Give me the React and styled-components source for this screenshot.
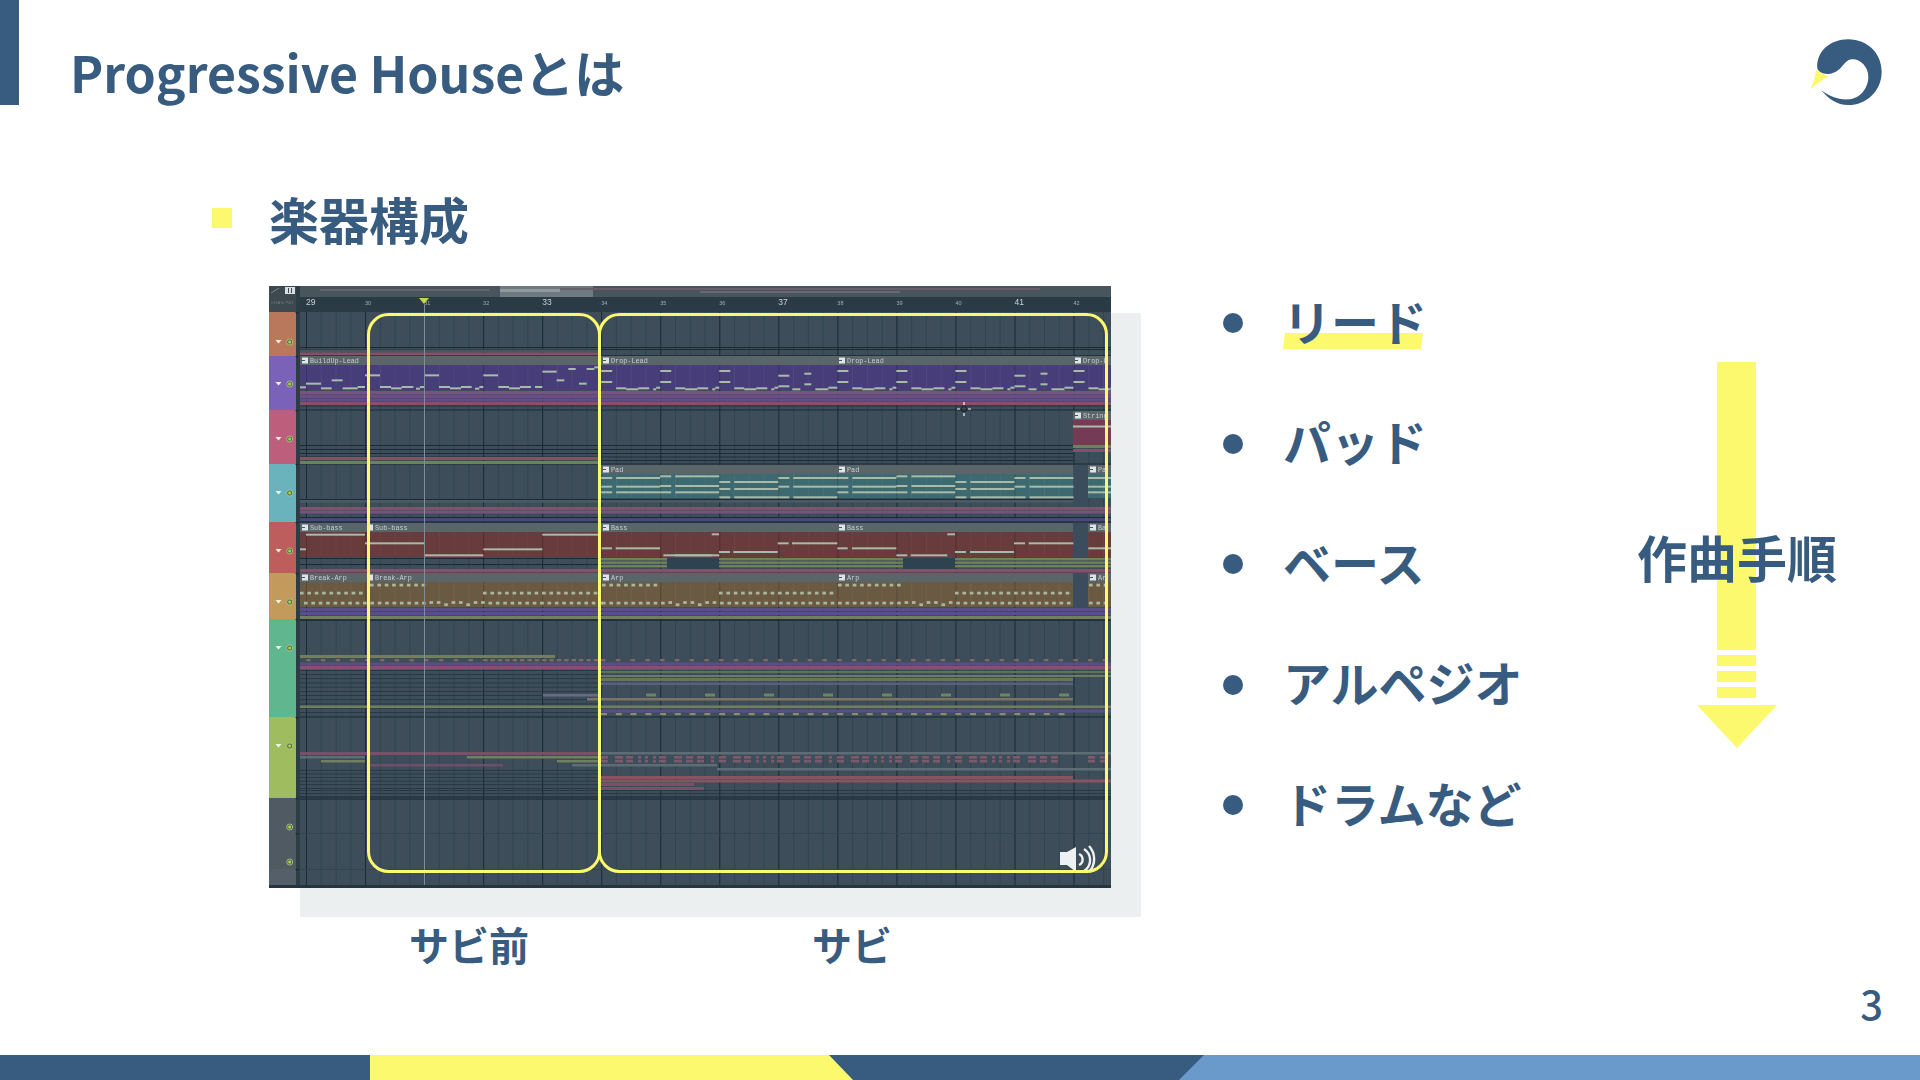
import React from "react";
import styled, { createGlobalStyle } from "styled-components";

const NAVY = "#385c80";
const YELLOW = "#fcf96f";
const FONT = `"Noto Sans CJK JP", "Noto Sans", sans-serif`;

const GlobalStyle = createGlobalStyle`
  html, body {
    margin: 0;
    padding: 0;
    background: #fff;
  }
`;

const Page = styled.div`
  width: 1920px;
  height: 1080px;
  display: flex;
  flex-direction: column;
  overflow: hidden;
  background: #fff;
  color: ${NAVY};
  font-family: ${FONT};
`;

// Header

const Header = styled.header`
  height: 105px;
  display: flex;
  align-items: flex-start;
`;

const AccentBar = styled.div`
  width: 19px;
  height: 105px;
  background: ${NAVY};
`;

const Title = styled.h1`
  margin: 41px 0 0 51px;
  font-size: 50px;
  line-height: 60px;
  font-weight: 700;
`;

const Logo = styled.svg`
  width: 140px;
  height: 100px;
  margin: 20px 0 0 auto;
`;

// Body

const Body = styled.main`
  height: 875px;
  display: flex;
  padding-left: 212px;
`;

const LeftColumn = styled.section`
  width: 929px;
  flex: none;
`;

const SectionRow = styled.div`
  height: 72px;
  margin-top: 80px;
  display: flex;
  align-items: center;
  gap: 37px;
`;

const Square = styled.span`
  width: 20px;
  height: 20px;
  margin-top: -6px;
  background: ${YELLOW};
`;

const SectionTitle = styled.h2`
  margin: -6px 0 0;
  font-size: 50px;
  line-height: 72px;
  font-weight: 700;
`;

const Frame = styled.div`
  position: relative;
  isolation: isolate;
  width: 842px;
  height: 602px;
  margin: 29px 0 0 57px;

  &::before {
    content: "";
    position: absolute;
    z-index: -1;
    left: 31px;
    top: 27px;
    width: 841px;
    height: 604px;
    background: #ebeff0;
  }
`;

const Daw = styled.svg`
  display: block;
  width: 842px;
  height: 602px;
`;

const Captions = styled.div`
  display: grid;
  grid-template-columns: 400px 366px;
  margin: 36px 0 0 57px;
`;

const Caption = styled.div`
  text-align: center;
  font-size: 40px;
  line-height: 40px;
  font-weight: 700;
`;

const List = styled.ul`
  list-style: none;
  margin: 157px 0 0 82px;
  padding: 0;
`;

const Item = styled.li`
  height: 120.5px;
  display: flex;
  align-items: center;
  gap: 40px;
  font-size: 48px;
  font-weight: 700;
`;

const Dot = styled.span`
  width: 20px;
  height: 20px;
  margin-top: 2px;
  border-radius: 50%;
  background: ${NAVY};
`;

const ItemText = styled.span`
  position: relative;
  z-index: 0;
  margin-top: -5px;
  line-height: 48px;
  ${(p) =>
    p.$marked &&
    `
    &::before {
      content: "";
      position: absolute;
      z-index: -1;
      left: 1px;
      right: 5px;
      top: 37px;
      height: 16px;
      background: ${YELLOW};
      transform: skewX(-7deg);
    }
  `}
`;

const ArrowColumn = styled.div`
  position: relative;
  width: 80px;
  margin: 257px 143px 0 auto;
  display: flex;
  flex-direction: column;
  align-items: center;
`;

const Shaft = styled.div`
  width: 39px;
  height: 288px;
  margin-right: 1px;
  background: ${YELLOW};
`;

const Stripe = styled.div`
  width: 39px;
  height: 11px;
  margin: 5px 1px 0 0;
  background: ${YELLOW};
`;

const ArrowHead = styled.div`
  width: 80px;
  height: 43px;
  margin-top: 7px;
  background: ${YELLOW};
  clip-path: polygon(0 0, 100% 0, 50% 100%);
`;

const ArrowLabel = styled.div`
  position: absolute;
  top: 169px;
  left: 50%;
  transform: translateX(-50%);
  white-space: nowrap;
  font-size: 50px;
  line-height: 50px;
  font-weight: 700;
`;

// Footer

const PageNumber = styled.div`
  height: 50px;
  margin-bottom: 25px;
  padding-right: 37px;
  text-align: right;
  font-size: 40px;
  line-height: 46px;
  font-weight: 500;
`;

const Footer = styled.footer`
  height: 25px;
  display: flex;
  background: ${NAVY};
`;

const FooterYellow = styled.div`
  width: 483px;
  margin-left: 370px;
  background: ${YELLOW};
  clip-path: polygon(0 0, 459px 0, 100% 100%, 0 100%);
`;

const FooterBlue = styled.div`
  width: 741px;
  margin-left: auto;
  background: #6a99cb;
  clip-path: polygon(25px 0, 100% 0, 100% 100%, 0 100%);
`;

// DAW picture helpers, all in page coordinates (viewBox starts at 269,286)

const BAR = 59.04;
const barX = (n) => 306 + BAR * (n - 29);
const bars = [];
for (let n = 28; n <= 43; n++) bars.push(n);

const Z1 = (v) => 260 + v / 3;
const Y1 = (v) => 280 + v / 3;
const Z2 = (v) => 660 + v / 3;

const channels = [
  [312, 356, "#b9785c", 342, true],
  [356, 410, "#7a62b8", 384, true],
  [410, 464, "#bd5f7c", 439, true],
  [464, 522, "#6bb3bd", 493, true],
  [522, 573, "#bd5d5c", 551, true],
  [573, 619, "#c29a5c", 602, true],
  [619, 717, "#61b78f", 648, true],
  [717, 798, "#9fbc5f", 746, true],
  [798, 833, "#4f5a64", 827, false],
  [833, 869, "#4f5a64", 862, false],
  [869, 888, "#545f69", 0, false],
];

const PINK = "#8a5068";
const OLIVE = "#6f7f5c";
const PURPLE = "#5f4e8a";
const MAUVE = "#77527f";
const NOTE = "#a9bba8";
const GRAY = "#5d6c74";

// [x1, x2, y, height, colour]
const stripes = [
  [300, 1111, 347, 1, "#1d2a32"],
  [300, 1111, 349, 1, "#1d2a32"],
  [300, 601, 349.5, 2.5, "#48565e"],
  [300, 601, 352.5, 3, PINK],
  [300, 1111, 355.5, 1, "#1d2a32"],
  [300, 1111, 391, 3.5, MAUVE],
  [300, 1111, 395, 3, "#6d4e85"],
  [300, 1111, 398.5, 3, PURPLE],
  [300, 1111, 402, 3, PINK],
  [300, 1111, 405.5, 1, "#24323a"],
  [300, 1073, 445, 1, "#1f2c34"],
  [300, 1073, 449, 1, "#1f2c34"],
  [300, 1073, 453, 1, "#1f2c34"],
  [300, 1073, 456.5, 1, "#1f2c34"],
  [300, 601, 457, 3, PINK],
  [300, 601, 461, 3, OLIVE],
  [601, 1073, 460, 1, "#1f2c34"],
  [300, 1073, 499, 1, "#1f2c34"],
  [300, 1073, 500, 2.5, "#4c5a60"],
  [300, 1111, 507, 3, PINK],
  [300, 1111, 510.5, 3, MAUVE],
  [300, 1111, 517, 1, "#1f2c34"],
  [300, 1111, 518.5, 3, "#4a4680"],
  [300, 1111, 521.5, 1, "#1f2c34"],
  [300, 601, 558, 1, "#1f2c34"],
  [300, 601, 564, 1, "#1f2c34"],
  [300, 1111, 569, 3.5, PINK],
  [300, 1111, 608, 3, "#5c4e86"],
  [300, 1111, 612, 3, "#5c4e86"],
  [300, 1111, 616, 3, OLIVE],
  [300, 1111, 619.5, 1, "#1d2a32"],
  [300, 555, 655, 3, OLIVE],
  [300, 1111, 662.5, 3, "#5a4e88"],
  [300, 1111, 666, 3.5, "#8a5070"],
  [601, 1111, 671, 2, "#5f7258"],
  [601, 1111, 675, 2, "#6a7b5c"],
  [601, 1073, 678, 3, "#66755c"],
  [601, 1073, 682.5, 2.5, "#5a5f80"],
  [543, 601, 694, 2.5, "#6b6a84"],
  [587, 1073, 698, 2.5, "#7d7460"],
  [300, 1111, 705.5, 2.5, OLIVE],
  [601, 1111, 709.5, 3, "#5a4e88"],
  [300, 601, 752, 3, "#7a5068"],
  [601, 1111, 752, 2.5, GRAY],
  [300, 365, 756, 2.5, GRAY],
  [467, 600, 756, 2.5, OLIVE],
  [321, 365, 760, 2.5, OLIVE],
  [557, 600, 760, 2.5, OLIVE],
  [370, 503, 764, 2.5, "#6d4f68"],
  [572, 717, 764, 2.5, GRAY],
  [717, 1111, 768, 2.5, GRAY],
  [601, 1073, 776, 3, "#86545f"],
  [601, 1111, 779.5, 3, "#86545f"],
  [601, 694, 783, 3, "#7c5068"],
  [601, 704, 787, 3, "#7c5068"],
  [300, 1111, 833, 1, "#33444f"],
  [300, 1111, 869, 1, "#33444f"],
];

// thin dark lines in the busy parts of the piano roll
const rules = [];
for (let y = 670; y < 716; y += 4.2) rules.push([300, 601, y]);
for (let y = 790; y < 800; y += 3) rules.push([300, 1111, y]);
for (let y = 770; y < 790; y += 3.6) rules.push([300, 601, y]);

const LEAD = "#473e78";
const STR = "#743a55";
const TEAL = "#3d6a70";
const RED = "#673a3d";
const TAN = "#6b5a42";

// [x, width, label, top, bottom, body]
const clips = [
  [300, 301, "BuildUp-Lead", 356, 390, LEAD],
  [601, 236, "Drop-Lead", 356, 390, LEAD],
  [837, 236, "Drop-Lead", 356, 390, LEAD],
  [1073, 38, "Drop-L", 356, 390, LEAD],
  [1073, 38, "String", 411, 445, STR],
  [601, 236, "Pad", 465, 498, TEAL],
  [837, 236, "Pad", 465, 498, TEAL],
  [1088, 23, "Pa", 465, 498, TEAL],
  [300, 65, "Sub-bass", 523, 557, RED],
  [365, 236, "Sub-bass", 523, 557, RED],
  [601, 236, "Bass", 523, 557, RED],
  [837, 236, "Bass", 523, 557, RED],
  [1088, 23, "Ba", 523, 557, RED],
  [300, 65, "Break-Arp", 573, 607, TAN],
  [365, 236, "Break-Arp", 573, 607, TAN],
  [601, 236, "Arp", 573, 607, TAN],
  [837, 236, "Arp", 573, 607, TAN],
  [1088, 23, "Ar", 573, 607, TAN],
];

const clipBands = [
  [300, 1111, 365, 25],
  [601, 1073, 474, 24],
  [1088, 1111, 474, 24],
  [300, 1073, 532, 25],
  [1088, 1111, 532, 25],
  [300, 1073, 582, 25],
  [1088, 1111, 582, 25],
];

const buildUp = [
  [120, 138, 322], [138, 183, 311], [183, 215, 325], [215, 248, 301], [248, 293, 325],
  [293, 315, 321], [315, 360, 286], [360, 393, 321], [393, 425, 325], [425, 460, 321],
  [468, 480, 326], [480, 493, 321], [493, 537, 286], [537, 570, 321], [570, 603, 325],
  [603, 635, 321], [645, 658, 326], [658, 670, 321], [670, 714, 286], [715, 747, 321],
  [747, 780, 325], [780, 813, 321], [825, 847, 321], [847, 890, 275], [890, 913, 301],
  [925, 947, 267], [957, 980, 311], [980, 1003, 267], [1003, 1015, 262],
].map(([a, b, y]) => [Z1(a), Z1(b), Y1(y)]);

const subBass = [
  [120, 138, 808], [138, 315, 764], [315, 493, 790], [493, 670, 826], [670, 847, 808], [847, 1015, 764],
].map(([a, b, y]) => [Z1(a), Z1(b), Y1(y)]);

const bass = [
  [1025, 1056, 805], [1067, 1200, 805], [1210, 1378, 826],
].map(([a, b, y]) => [Z1(a), Z1(b), Y1(y)]).concat(
  [
    [45, 155, 826], [155, 177, 763], [177, 210, 816], [220, 353, 816], [353, 386, 790],
    [396, 532, 790], [532, 563, 805], [576, 709, 805], [709, 742, 826], [752, 862, 826],
    [862, 885, 763], [885, 918, 816], [930, 1062, 816], [1062, 1095, 790], [1106, 1240, 790],
    [1285, 1353, 805],
  ].map(([a, b, y]) => [Z2(a), Z2(b), Y1(y)])
);

const leadA = [[0, 11, 371], [0, 11, 382], [15, 25, 388.3], [25, 37, 389.3], [37, 48, 388.3], [52, 55, 389.3], [55, 59, 387.7]];
const leadB = [[0, 11, 375.7], [0, 11, 386.3], [14, 22, 389.3], [26, 33, 373.7], [26, 33, 384.3], [37, 50, 389.3], [50, 59, 387.7]];

const lead = [];
for (let n = 34; n <= 42; n++) {
  const x = barX(n);
  ((n - 34) % 4 === 3 ? leadB : leadA).forEach(([a, b, y]) => lead.push([x + a, Math.min(x + b, 1111), y]));
}

const chords = [
  [594, 620, 637],
  [589, 618, 637],
  [606, 627, 652],
  [594, 620, 652],
];

const pad = [];
for (let n = 34; n <= 41; n++) {
  const x = barX(n);
  chords[(n - 34) % 4].forEach((y) => {
    pad.push([x, x + 11, Y1(y)]);
    pad.push([x + 15, x + 59, Y1(y)]);
  });
}
[594, 620, 637].forEach((y) => pad.push([1088, 1111, Y1(y)]));

const dotRun = (a, b, y, step = 7.38) => {
  const out = [];
  for (let x = a; x < b; x += step) out.push([x, y]);
  return out;
};

// the low arp row wiggles in every fourth bar
const wiggly = (x) => (x > 428 && x < 483) || (x > 663 && x < 719) || (x > 900 && x < 955);
const wiggle = (list) =>
  list.map(([x, y], i) => [x, wiggly(x) ? y + (i % 3 === 1 ? 1.6 : -0.6) : y]);

const arpDots = [
  ...dotRun(300, 361, 593),
  ...dotRun(370, 427, 585),
  ...dotRun(483, 600, 593),
  ...wiggle(dotRun(304, 600, 603)),
  ...dotRun(602, 660, 585),
  ...dotRun(719, 833, 593),
  ...dotRun(838, 900, 585),
  ...dotRun(955, 1069, 593),
  ...wiggle(dotRun(602, 1072, 603)),
  ...dotRun(1089, 1111, 585),
  ...dotRun(1089, 1111, 603),
];

const leadDashes = [
  ...dotRun(306, 480, 660, 14.76),
  ...dotRun(483, 595, 660, 7.38),
  ...dotRun(601, 1105, 660, 14.76),
];
const lowDashes = dotRun(601, 1060, 714, 14.76);

// two-bar drum figure under the lime channel, repeated from bar 34
const drumFigure = [[0, 7], [14, 22], [25, 32], [37, 40], [44, 47], [52, 55], [58, 65], [73, 81], [85, 92], [96, 103], [110, 113]];
const drumBlocks = [];
for (let start = 601; start < 1068; start += 118) {
  drumFigure.forEach(([a, b]) => {
    if (start + b < 1068) drumBlocks.push([start + a, b - a]);
  });
}
[1088, 1100].forEach((x) => drumBlocks.push([x, 7]));

const tomMarks = [646, 705, 764, 823, 882, 941, 1000, 1059];

const Line = ({ notes, colour = NOTE, h = 2 }) =>
  notes.map(([a, b, y], i) => <rect key={i} x={a} y={y - h / 2} width={b - a} height={h} fill={colour} />);

function DawPicture() {
  return (
    <Daw viewBox="269 286 842 602">
      <defs>
        <filter id="soft" x="0" y="0" width="100%" height="100%">
          <feGaussianBlur stdDeviation="0.45" />
        </filter>
      </defs>
      <g filter="url(#soft)">
        <rect x="269" y="286" width="842" height="602" fill="#3c4e5a" />

        {/* overview strip and timeline */}
        <rect x="269" y="286" width="842" height="12" fill="#4a555c" />
        <rect x="500" y="286" width="93" height="11" fill="#6e7a80" />
        <rect x="500" y="289" width="60" height="3" fill="#8f9a9c" />
        <rect x="320" y="289" width="170" height="2" fill="#66626e" />
        <rect x="560" y="288" width="480" height="2" fill="#65606c" />
        <rect x="700" y="291" width="200" height="2" fill="#6a6676" />
        <rect x="269" y="297" width="842" height="15" fill="#2c3a44" />

        {/* grid */}
        {bars.map((n) =>
          [1, 2, 3].map((k) => (
            <rect key={`${n}-${k}`} x={barX(n) + (BAR / 4) * k} y="312" width="1" height="576" fill="#324450" />
          ))
        )}
        {bars.map((n) => (
          <rect key={n} x={barX(n)} y="312" width="1" height="576" fill="#1b2932" />
        ))}
        {[356, 410, 464, 522, 573, 620, 717, 798].map((y) => (
          <rect key={y} x="300" y={y - 0.5} width="811" height="1" fill="#1d2a32" />
        ))}
        {rules.map(([a, b, y], i) => (
          <rect key={i} x={a} y={y} width={b - a} height="0.7" fill="#22323c" />
        ))}

        {/* empty gap columns */}
        <rect x="1073" y="465" width="15" height="154" fill="#3a4d5b" />
        <rect x="667" y="558" width="52" height="11" fill="#2f4250" />
        <rect x="903" y="558" width="52" height="11" fill="#2f4250" />

        {/* bass olive lines */}
        {[[601, 667], [719, 903], [955, 1111]].map(([a, b]) =>
          [558, 561.5, 565].map((y) => <rect key={`${a}-${y}`} x={a} y={y} width={b - a} height="2.4" fill={OLIVE} />)
        )}

        {stripes.map(([a, b, y, h, c], i) => (
          <rect key={i} x={a} y={y} width={b - a} height={h} fill={c} />
        ))}

        {/* clips */}
        {clips.map(([x, w, label, top, bottom, body], i) => (
          <g key={i}>
            <rect x={x} y={top} width={w} height={bottom - top} fill={body} />
            <rect x={x} y={top} width={w} height="9" fill="#5a656b" />
            <rect x={x + 2} y={top + 1.5} width="6" height="6" fill="#dfe5e6" />
            <rect x={x + 2} y={top + 4} width="3" height="1" fill="#4a555c" />
            <text x={x + 10} y={top + 7} fontFamily="Liberation Mono, monospace" fontSize="6.8" fill="#c6ced0">
              {label}
            </text>
          </g>
        ))}

        {/* beat lines showing through the clip bodies */}
        {clipBands.map(([a, b, y, h]) =>
          bars.map((n) =>
            [0, 1, 2, 3].map((k) => {
              const x = barX(n) + (BAR / 4) * k;
              return x > a && x < b ? (
                <rect key={`${y}-${a}-${n}-${k}`} x={x} y={y} width="1" height={h} fill={k === 0 ? "#00000033" : "#ffffff0d"} />
              ) : null;
            })
          )
        )}

        <Line notes={buildUp} />
        <Line notes={lead} />
        <Line notes={pad} />
        <Line notes={subBass} />
        <Line notes={bass} />
        <rect x="1073" y="425.5" width="38" height="2" fill={NOTE} />
        <rect x="1073" y="445" width="38" height="3" fill={OLIVE} />
        <rect x="1073" y="449" width="38" height="3" fill={PINK} />

        {arpDots.map(([x, y], i) => (
          <rect key={i} x={x} y={y - 1.3} width="3.6" height="2.8" fill="#aab69c" />
        ))}
        {leadDashes.map(([x, y], i) => (
          <rect key={i} x={x} y={y - 1} width="4.5" height="2.4" fill="#7e6a62" />
        ))}
        {lowDashes.map(([x, y], i) => (
          <rect key={i} x={x} y={y - 1} width="6" height="2.2" fill="#8d8d6c" />
        ))}
        {drumBlocks.map(([x, w], i) => (
          <g key={i}>
            <rect x={x} y="756" width={w} height="6.5" fill="#7c5a6c" />
            <rect x={x} y="758.7" width={w} height="1.2" fill="#3c4e5a" />
          </g>
        ))}
        {tomMarks.map((x) => (
          <rect key={x} x={x} y="693.5" width="10" height="3" fill="#6f8268" />
        ))}

        {/* timeline numbers */}
        {bars.slice(1, 15).map((n) => (
          <text
            key={n}
            x={barX(n)}
            y={n % 4 === 1 ? 305 : 304.5}
            fontFamily="Liberation Sans, sans-serif"
            fontSize={n % 4 === 1 ? 8.5 : 5.5}
            fill={n % 4 === 1 ? "#c8d2d6" : "#9fadb3"}
          >
            {n}
          </text>
        ))}

        {/* playhead */}
        <rect x="424" y="305" width="1" height="583" fill="#7f8f99" />
        <polygon points="419,298 429,298 424,304" fill="#c3d65c" />

        {/* channel column */}
        <rect x="269" y="286" width="27" height="26" fill="#3d484f" />
        <rect x="285" y="287" width="10" height="7" fill="#d9dfe1" />
        <rect x="288" y="288" width="1" height="5" fill="#3d484f" />
        <rect x="291" y="288" width="1" height="5" fill="#3d484f" />
        <path d="M271 293 L279 288" stroke="#7b868c" strokeWidth="1" />
        <text x="271" y="304" fontFamily="Liberation Sans, sans-serif" fontSize="4" letterSpacing="0.4" fill="#6f7c83">
          CHAN PAT
        </text>
        <rect x="296" y="286" width="4" height="602" fill="#2f3c44" />
        {channels.map(([top, bottom, colour, cy, arrow]) => (
          <g key={top}>
            <rect x="269" y={top} width="27" height={bottom - top} fill={colour} />
            <polygon points={`${295},${top} ${299},${top} ${297},${top + 2}`} fill="#1d2a32" />
            {arrow && <polygon points={`${275.5},${cy - 2} ${281.5},${cy - 2} ${278.5},${cy + 1.5}`} fill="#f3f3f0" />}
            {cy > 0 && (
              <>
                <circle cx="289.7" cy={cy} r="3" fill="#4a5a3a" stroke="#c8dca0" strokeWidth="0.7" />
                <circle cx="289.7" cy={cy} r="1.7" fill="#9fd04e" />
              </>
            )}
          </g>
        ))}
        <rect x="269" y="885" width="842" height="3" fill="#27343d" />

        {/* move cursor */}
        <g stroke="#f4f6f6" strokeWidth="1.2" fill="none">
          <circle cx="964" cy="409" r="2.6" stroke="#20282c" />
          <path d="M964 402 V405 M964 413 V416 M957 409 H960 M968 409 H971" />
        </g>
      </g>

      {/* speaker badge */}
      <g fill="#eef1f2">
        <path d="M1060 852 H1067 L1076 847 V872 L1067 865 H1060 Z" />
      </g>
      <g fill="none" stroke="#eef1f2" strokeWidth="2.4">
        <path d="M1079 854 A6 6 0 0 1 1079 865" />
        <path d="M1084 849 A13 13 0 0 1 1084 871" />
        <path d="M1089 846 A19 19 0 0 1 1089 872" />
      </g>

      {/* section brackets */}
      <rect x="368.5" y="314.5" width="231" height="557" rx="20" fill="none" stroke={YELLOW} strokeWidth="3" />
      <rect x="599.5" y="314.5" width="507" height="557" rx="20" fill="none" stroke={YELLOW} strokeWidth="3" />
    </Daw>
  );
}

const instruments = ["リード", "パッド", "ベース", "アルペジオ", "ドラムなど"];

export default function App() {
  return (
    <Page>
      <GlobalStyle />
      <Header>
        <AccentBar />
        <Title>Progressive Houseとは</Title>
        <Logo viewBox="0 0 420 300">
          <path
            fill={NAVY}
            d="M112 145 C108 95 150 58 205 58 C262 58 305 100 305 155 C305 212 260 255 205 255 C170 255 145 235 125 212 C150 228 175 240 205 238 C240 236 265 205 265 170 C265 140 240 116 215 118 C190 120 185 160 145 162 C128 163 115 155 112 145 Z"
          />
          <path fill={YELLOW} d="M108 150 L145 170 C125 180 105 195 92 208 C100 190 105 170 108 150 Z" />
        </Logo>
      </Header>
      <Body>
        <LeftColumn>
          <SectionRow>
            <Square />
            <SectionTitle>楽器構成</SectionTitle>
          </SectionRow>
          <Frame>
            <DawPicture />
          </Frame>
          <Captions>
            <Caption>サビ前</Caption>
            <Caption>サビ</Caption>
          </Captions>
        </LeftColumn>
        <List>
          {instruments.map((name, index) => (
            <Item key={name}>
              <Dot />
              <ItemText $marked={index === 0}>{name}</ItemText>
            </Item>
          ))}
        </List>
        <ArrowColumn>
          <Shaft />
          <Stripe />
          <Stripe />
          <Stripe />
          <ArrowHead />
          <ArrowLabel>作曲手順</ArrowLabel>
        </ArrowColumn>
      </Body>
      <PageNumber>3</PageNumber>
      <Footer>
        <FooterYellow />
        <FooterBlue />
      </Footer>
    </Page>
  );
}
